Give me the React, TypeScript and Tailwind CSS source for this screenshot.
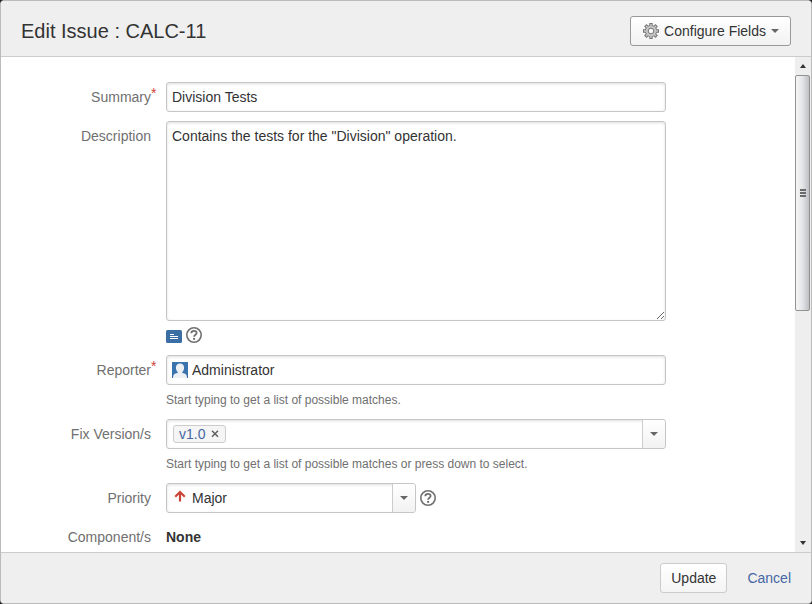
import { useState } from "react";
import type { ReactNode } from "react";

const fieldBox =
  "w-full rounded-[3px] border border-[#c6c6c6] bg-white shadow-[inset_0_1px_3px_#dddddd]";

function HelpIcon() {
  return (
    <svg viewBox="0 0 16 16" className="size-4" fill="none" aria-hidden="true">
      <circle cx="8" cy="8" r="7.2" stroke="#707070" strokeWidth="1.6" />
      <path
        d="M5.300 6.200c0-1.500 1.100-2.400 2.700-2.400 1.500 0 2.600.8 2.600 2.200 0 1.700-2.500 1.800-2.500 3.800"
        stroke="#707070"
        strokeWidth="1.800"
      />
      <path d="M7.100 10.900h2v1.900h-2z" fill="#707070" />
    </svg>
  );
}

// Teeth are four crossing bars, drawn dark first and then lighter inside
function GearIcon() {
  const teeth = "M8 0v16M0 8h16M2.300 2.300l11.400 11.400M13.700 2.300L2.300 13.700";
  const teethInner =
    "M8 1v14M1 8h14M3 3l10 10M13 3L3 13";

  return (
    <svg viewBox="0 0 16 16" className="size-4" fill="none" aria-hidden="true">
      <path d={teeth} stroke="#777" strokeWidth="3.400" />
      <circle cx="8" cy="8" r="6.100" fill="#777" />
      <path d={teethInner} stroke="#c6c6c6" strokeWidth="1.500" />
      <circle cx="8" cy="8" r="5.200" fill="#c6c6c6" />
      <circle cx="8" cy="8" r="2.800" fill="#fafafa" stroke="#777" />
    </svg>
  );
}

function AvatarIcon() {
  return (
    <svg viewBox="0 0 16 16" className="size-4 shrink-0" aria-hidden="true">
      <path fill="#3b73af" d="M0 0h16v16H0z" />
      <path
        fill="#eef1f4"
        d="M8 1.500c2.700 0 4.100 1.700 4.100 4.200 0 1.800-.7 3.500-1.800 4.400v.9c1.800.4 3.900.9 4.300 2.600l.4 2.400H1l.4-2.400c.4-1.700 2.500-2.200 4.300-2.600v-.9c-1.100-.9-1.800-2.600-1.800-4.400C3.900 3.200 5.300 1.500 8 1.500z"
      />
    </svg>
  );
}

function Caret() {
  return (
    <svg viewBox="0 0 8 4" className="h-1 w-2" aria-hidden="true">
      <path d="M0 0h8L4 4z" fill="#666" />
    </svg>
  );
}

interface FieldProps {
  label: string;
  htmlFor?: string;
  required?: boolean;
  hint?: string;
  children: ReactNode;
}

function Field({ label, htmlFor, required, hint, children }: FieldProps) {
  return (
    <div className="flex gap-[15px]">
      <div className="w-[150px] shrink-0 text-right leading-[30px] text-[#707070]">
        <label htmlFor={htmlFor} className="relative">
          {label}
          {required && (
            <span className="absolute left-full top-0 -mt-1.5 leading-5 text-[#d04437]">
              *
            </span>
          )}
        </label>
      </div>
      <div className="w-full max-w-[500px]">
        {children}
        {hint && (
          <p className="mt-[5px] text-xs leading-5 text-[#707070]">{hint}</p>
        )}
      </div>
    </div>
  );
}

function ScrollTrack() {
  return (
    <div
      className="flex w-4 shrink-0 flex-col items-center bg-[#eeeeee]"
      aria-hidden="true"
    >
      <div className="flex h-[18px] shrink-0 items-center">
        <svg viewBox="0 0 6 4" className="h-1 w-1.5">
          <path d="M3 0l3 4H0z" fill="#333" />
        </svg>
      </div>
      <div className="mr-px flex h-[236px] w-[15px] flex-col items-center justify-center gap-px rounded-[2px] border border-[#929292] bg-linear-to-r from-[#f6f6f6] via-[#e4e5e8] to-[#bdbfc4]">
        <div className="h-0.5 w-1.5 bg-[#6b6b6b]" />
        <div className="h-0.5 w-1.5 bg-[#6b6b6b]" />
        <div className="h-0.5 w-1.5 bg-[#6b6b6b]" />
      </div>
      <div className="mt-auto flex h-[18px] shrink-0 items-center">
        <svg viewBox="0 0 6 4" className="h-1 w-1.5">
          <path d="M0 0h6L3 4z" fill="#333" />
        </svg>
      </div>
    </div>
  );
}

export default function App() {
  const [summary, setSummary] = useState("Division Tests");
  const [description, setDescription] = useState(
    'Contains the tests for the "Division" operation.'
  );
  const [reporter, setReporter] = useState("Administrator");
  const [versions, setVersions] = useState(["v1.0"]);
  const [priority, setPriority] = useState("Major");

  return (
    <div className="h-screen bg-[#222222] font-['Liberation_Sans',Arial,sans-serif] text-sm text-[#333333]">
      <form
        className="flex h-full flex-col overflow-hidden rounded-[4px] border border-[#bbbbbb] bg-white"
        onSubmit={(e) => e.preventDefault()}
      >
        <header className="flex h-14 shrink-0 items-center justify-between border-b border-[#cccccc] bg-[#efefef] px-5 pb-px pt-1.5">
          <h1 className="text-xl">Edit Issue : CALC-11</h1>
          <button
            type="button"
            className="flex h-[30px] items-center gap-[5px] rounded-[3px] border border-[#999999] bg-linear-to-b from-white to-[#f2f2f2] pl-3 pr-[11px]"
          >
            <GearIcon />
            Configure Fields
            <Caret />
          </button>
        </header>

        <div className="flex min-h-0 flex-1">
          <div className="flex min-w-0 flex-1 flex-col gap-[9px] overflow-hidden pr-5 pt-[25px]">
            <Field label="Summary" htmlFor="summary" required>
              <input
                id="summary"
                type="text"
                value={summary}
                onChange={(e) => setSummary(e.target.value)}
                className={`${fieldBox} block h-[30px] px-[5px]`}
              />
            </Field>

            <Field label="Description" htmlFor="description">
              <textarea
                id="description"
                value={description}
                onChange={(e) => setDescription(e.target.value)}
                className={`${fieldBox} block h-[200px] px-[5px] py-1 leading-5`}
              />
              <div className="flex gap-1 pb-[3px] pt-1.5">
                <button type="button" aria-label="Preview">
                  <svg viewBox="0 0 16 16" className="size-4" aria-hidden="true">
                    <rect y="3" width="16" height="13" rx="1.5" fill="#3b6ea5" />
                    <path
                      d="M4 7.500h4M4 9.500h8M4 11.500h8"
                      stroke="#fff"
                    />
                  </svg>
                </button>
                <button type="button" aria-label="Formatting help">
                  <HelpIcon />
                </button>
              </div>
            </Field>

            <Field
              label="Reporter"
              htmlFor="reporter"
              required
              hint="Start typing to get a list of possible matches."
            >
              <div className={`${fieldBox} flex h-[30px] items-center gap-1 px-[5px]`}>
                <AvatarIcon />
                <input
                  id="reporter"
                  type="text"
                  value={reporter}
                  onChange={(e) => setReporter(e.target.value)}
                  className="min-w-0 flex-1 outline-none"
                />
              </div>
            </Field>

            <Field
              label="Fix Version/s"
              htmlFor="fix-versions"
              hint="Start typing to get a list of possible matches or press down to select."
            >
              <div className={`${fieldBox} flex h-[30px] items-center gap-1 pl-1.5`}>
                {versions.map((version) => (
                  <span
                    key={version}
                    className="flex h-[18px] items-center gap-1.5 rounded-[3px] border border-[#cccccc] bg-[#f5f5f5] px-[5px] text-[#4667a3]"
                  >
                    {version}
                    <button
                      type="button"
                      aria-label={`Remove ${version}`}
                      onClick={() =>
                        setVersions(versions.filter((v) => v !== version))
                      }
                    >
                      <svg viewBox="0 0 9 9" className="size-[9px]" aria-hidden="true">
                        <path
                          d="M1 .8l6 6M7 .8l-6 6"
                          stroke="#606060"
                          strokeWidth="1.500"
                        />
                      </svg>
                    </button>
                  </span>
                ))}
                <input
                  id="fix-versions"
                  type="text"
                  className="min-w-0 flex-1 outline-none"
                />
                <button
                  type="button"
                  aria-label="Show versions"
                  className="flex h-full w-[23px] items-center justify-center rounded-r-[3px] border-l border-[#cccccc] bg-linear-to-b from-white to-[#f2f2f2]"
                >
                  <Caret />
                </button>
              </div>
            </Field>

            <Field label="Priority" htmlFor="priority">
              <div className="flex items-center gap-1">
                <div className="relative w-[250px]">
                  <select
                    id="priority"
                    value={priority}
                    onChange={(e) => setPriority(e.target.value)}
                    className={`${fieldBox} block h-[30px] appearance-none pl-[25px] pr-7`}
                  >
                    <option>Blocker</option>
                    <option>Critical</option>
                    <option>Major</option>
                    <option>Minor</option>
                    <option>Trivial</option>
                  </select>
                  <svg
                    viewBox="0 0 12 12"
                    className="pointer-events-none absolute left-2 top-[7px] size-3"
                    fill="none"
                    aria-hidden="true"
                  >
                    <path
                      d="M6 11.500V2M1.200 6.800L6 2l4.800 4.800"
                      stroke="#c9453a"
                      strokeWidth="2.200"
                    />
                  </svg>
                  <span className="pointer-events-none absolute inset-y-px right-px flex w-[23px] items-center justify-center rounded-r-[2px] border-l border-[#cccccc] bg-linear-to-b from-white to-[#f2f2f2]">
                    <Caret />
                  </span>
                </div>
                <button type="button" aria-label="Priority help">
                  <HelpIcon />
                </button>
              </div>
            </Field>

            <Field label="Component/s">
              <span className="font-bold leading-[30px]">None</span>
            </Field>
          </div>
          <ScrollTrack />
        </div>

        <footer className="flex shrink-0 items-center justify-end gap-5 border-t border-[#cccccc] bg-[#efefef] px-5 py-2.5">
          <button
            type="submit"
            className="h-[30px] rounded-[3px] border border-[#cccccc] bg-linear-to-b from-white to-[#f4f4f4] px-2.5"
          >
            Update
          </button>
          <a href="#" className="text-[#4667a3]">
            Cancel
          </a>
        </footer>
      </form>
    </div>
  );
}
